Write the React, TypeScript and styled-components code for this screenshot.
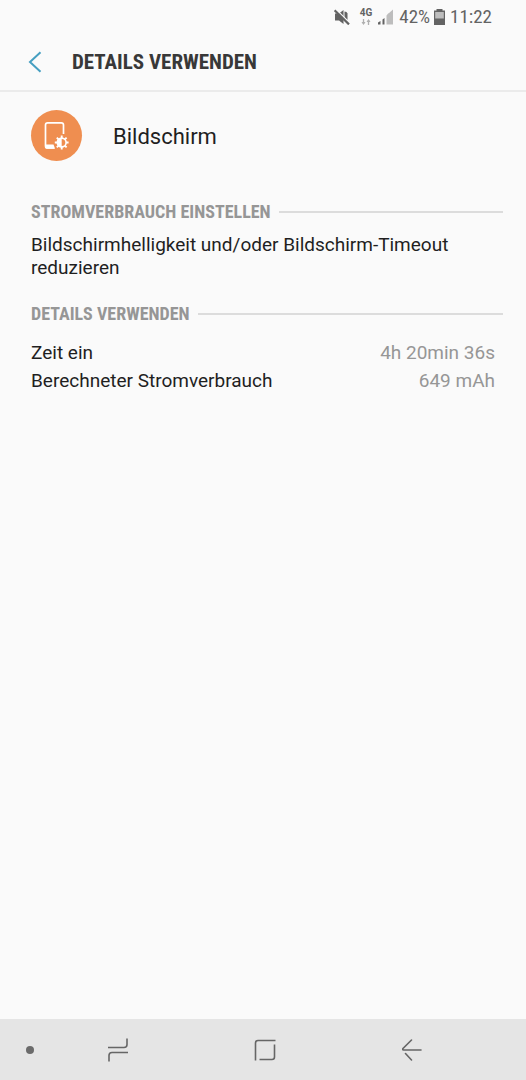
import React from "react";
import styled, { createGlobalStyle } from "styled-components";

const condensed = `"Roboto Condensed", Roboto, "Liberation Sans", sans-serif`;

const GlobalStyle = createGlobalStyle`
  *, *::before, *::after { box-sizing: border-box; }
  body {
    margin: 0;
    background: #fafafa;
    color: #1f1f1f;
    font-family: Roboto, "Liberation Sans", sans-serif;
  }
  svg { display: block; flex: none; }
`;

const Screen = styled.div`
  display: flex;
  flex-direction: column;
  min-height: 100vh;
`;

const StatusBar = styled.div`
  display: flex;
  align-items: center;
  justify-content: flex-end;
  height: 33px;
  padding: 0 34px 0 16px;
  color: #636363;
  font-family: ${condensed};
  font-size: 19px;
  line-height: 24px;
`;

const StatusItem = styled.span<{ $gap: number }>`
  margin-left: ${(p) => p.$gap}px;
`;

const NetworkType = styled.span`
  display: flex;
  flex-direction: column;
  align-items: center;
  gap: 2px;
  font-family: Roboto, "Liberation Sans", sans-serif;
  font-size: 10px;
  font-weight: 700;
  line-height: 9px;
`;

const Header = styled.header`
  display: flex;
  align-items: center;
  gap: 26px;
  height: 59px;
  padding: 0 24px;
  border-bottom: 2px solid #ebebeb;
`;

const IconButton = styled.button`
  display: flex;
  align-items: center;
  justify-content: center;
  padding: 0;
  border: 0;
  background: none;
  cursor: pointer;
`;

const BackButton = styled(IconButton)`
  width: 22px;
  height: 40px;
`;

const Title = styled.h1`
  margin: 0;
  color: #383838;
  font-family: ${condensed};
  font-size: 21px;
  font-weight: 700;
  line-height: 28px;
`;

const Main = styled.main`
  flex: 1;
  padding: 18px 23px 24px 31px;
`;

const AppRow = styled.div`
  display: flex;
  align-items: center;
  gap: 31px;
  margin-bottom: 40px;
`;

const AppIcon = styled.div`
  display: flex;
  align-items: center;
  justify-content: center;
  flex: none;
  width: 51px;
  height: 51px;
  border-radius: 50%;
  background: #ef8e50;
`;

const AppName = styled.div`
  padding-top: 2px;
  font-size: 22px;
  line-height: 28px;
`;

const Section = styled.section`
  margin-bottom: 24px;
`;

const SectionTitle = styled.h2`
  display: flex;
  align-items: center;
  gap: 8px;
  margin: 0 0 10px;
  color: #969696;
  font-family: ${condensed};
  font-size: 18px;
  font-weight: 700;
  line-height: 22px;

  &::after {
    content: "";
    flex: 1;
    height: 2px;
    background: #dcdcdc;
  }
`;

const Advice = styled.p`
  margin: 0;
  font-size: 19px;
  line-height: 23px;
`;

const Details = styled.dl`
  margin: 0;
  padding: 4px 8px 0 0;
  font-size: 19px;
  line-height: 28px;
`;

const Detail = styled.div`
  display: flex;
  justify-content: space-between;
`;

const Value = styled.dd`
  margin: 0;
  color: #969696;
`;

const NavBar = styled.nav`
  display: grid;
  grid-template-columns: 44px 1fr 1fr 1fr 40px;
  height: 61px;
  background: #e5e5e5;
`;

const DotButton = styled(IconButton)`
  padding-left: 16px;
`;

const navStroke = { fill: "none", stroke: "#666", strokeWidth: 1.6 };

export default function App() {
  return (
    <>
      <GlobalStyle />
      <Screen>
        <StatusBar>
          <svg width="16" height="16" viewBox="0 0 16 16" role="img" aria-label="Stumm">
            <path d="M1 4.500h4L9.500 1v14L5 11.500H1z" fill="#636363" />
            <path d="M10.500 2.500q2.500 0 3 2v6.500l-3-1.500z" fill="#636363" />
            <path d="M1.600 0 16 14.200" stroke="#fafafa" strokeWidth="1.400" />
            <path d="M.6 1.400 15 15.400" stroke="#636363" strokeWidth="2.200" />
          </svg>
          <StatusItem $gap={10}>
            <NetworkType>
              4G
              <svg width="10" height="6" viewBox="0 0 10 6" aria-hidden="true">
                <path d="M2.500 0v5M7.500 6V1" fill="none" stroke="#b0b0b0" strokeWidth="1.300" />
                <path d="M.5 3h4l-2 3zM5.500 3h4l-2-3z" fill="#b0b0b0" />
              </svg>
            </NetworkType>
          </StatusItem>
          <StatusItem $gap={6}>
            <svg width="15" height="16" viewBox="0 0 15 16" role="img" aria-label="Signal">
              <path d="M0 13.500 2.500 12v3.500H0zM4.500 10.500 6.500 9v6.500h-2z" fill="#636363" />
              <path d="M8.500 6.500 10.500 4v11.500h-2zM10.500 4.500 15 .5v15h-4.500z" fill="#bdbdbd" />
            </svg>
          </StatusItem>
          <StatusItem $gap={6}>42%</StatusItem>
          <StatusItem $gap={4}>
            <svg width="11" height="16" viewBox="0 0 11 16" role="img" aria-label="Akku">
              <path d="M2.500 0h6v1.500H11V16H0V1.500h2.500z" fill="#636363" />
              <path d="M1.200 3h8.600v6.500H1.200z" fill="#bdbdbd" />
            </svg>
          </StatusItem>
          <StatusItem $gap={5}>11:22</StatusItem>
        </StatusBar>

        <Header>
          <BackButton aria-label="Zurück">
            <svg width="14" height="22" viewBox="0 0 14 22">
              <path d="M12.500 1.200 2 11l10.500 9.800" fill="none" stroke="#469fc1" strokeWidth="2" />
            </svg>
          </BackButton>
          <Title>DETAILS VERWENDEN</Title>
        </Header>

        <Main>
          <AppRow>
            <AppIcon>
              <svg width="51" height="51" viewBox="0 0 51 51" fill="none" stroke="#fff" aria-hidden="true">
                <path d="M32.500 24V15q0-2.200-2.200-2.200H16.700q-2.200 0-2.200 2.200v21q0 2 2 2h6.500" strokeWidth="1.700" />
                <path d="M14.500 34.600h8l1.600 4.200h-7.600q-2.500 0-2.500-2.500z" fill="#fff" stroke="none" />
                <path d="M30.700 25.600v13.800M23.800 32.500h13.800M25.800 27.600l9.800 9.800M35.600 27.600l-9.800 9.800" strokeWidth="1.900" />
                <circle cx="30.700" cy="32.500" r="4.400" fill="#ef8e50" strokeWidth="1.600" />
                <path d="M30.700 28.100a4.400 4.400 0 0 0 0 8.800z" fill="#fff" stroke="none" />
              </svg>
            </AppIcon>
            <AppName>Bildschirm</AppName>
          </AppRow>

          <Section>
            <SectionTitle>STROMVERBRAUCH EINSTELLEN</SectionTitle>
            <Advice>Bildschirmhelligkeit und/oder Bildschirm-Timeout reduzieren</Advice>
          </Section>

          <Section>
            <SectionTitle>DETAILS VERWENDEN</SectionTitle>
            <Details>
              <Detail>
                <dt>Zeit ein</dt>
                <Value>4h 20min 36s</Value>
              </Detail>
              <Detail>
                <dt>Berechneter Stromverbrauch</dt>
                <Value>649 mAh</Value>
              </Detail>
            </Details>
          </Section>
        </Main>

        <NavBar>
          <DotButton aria-label="Navigationsleiste ausblenden">
            <svg width="8" height="8" viewBox="0 0 8 8">
              <circle cx="4" cy="4" r="4" fill="#6b6b6b" />
            </svg>
          </DotButton>
          <IconButton aria-label="Letzte Apps">
            <svg width="20" height="24" viewBox="0 0 20 24" {...navStroke}>
              <path d="M0 9.500h16q3 0 3-3V.5M20 14.500H4q-3 0-3 3v6" />
            </svg>
          </IconButton>
          <IconButton aria-label="Startseite">
            <svg width="22" height="22" viewBox="0 0 22 22" {...navStroke}>
              <path d="M1.500 21.500V4q0-2.500 2.500-2.500h17.500M20.500 5.500V18q0 2.500-2.500 2.500H5.500" />
            </svg>
          </IconButton>
          <IconButton aria-label="Zurück">
            <svg width="20" height="22" viewBox="0 0 20 22" {...navStroke} strokeLinecap="round">
              <path d="M9.500 1 1 9.500q-.8 1.500.5 1.500H19M3.500 14.500l6 6.500" />
            </svg>
          </IconButton>
        </NavBar>
      </Screen>
    </>
  );
}
